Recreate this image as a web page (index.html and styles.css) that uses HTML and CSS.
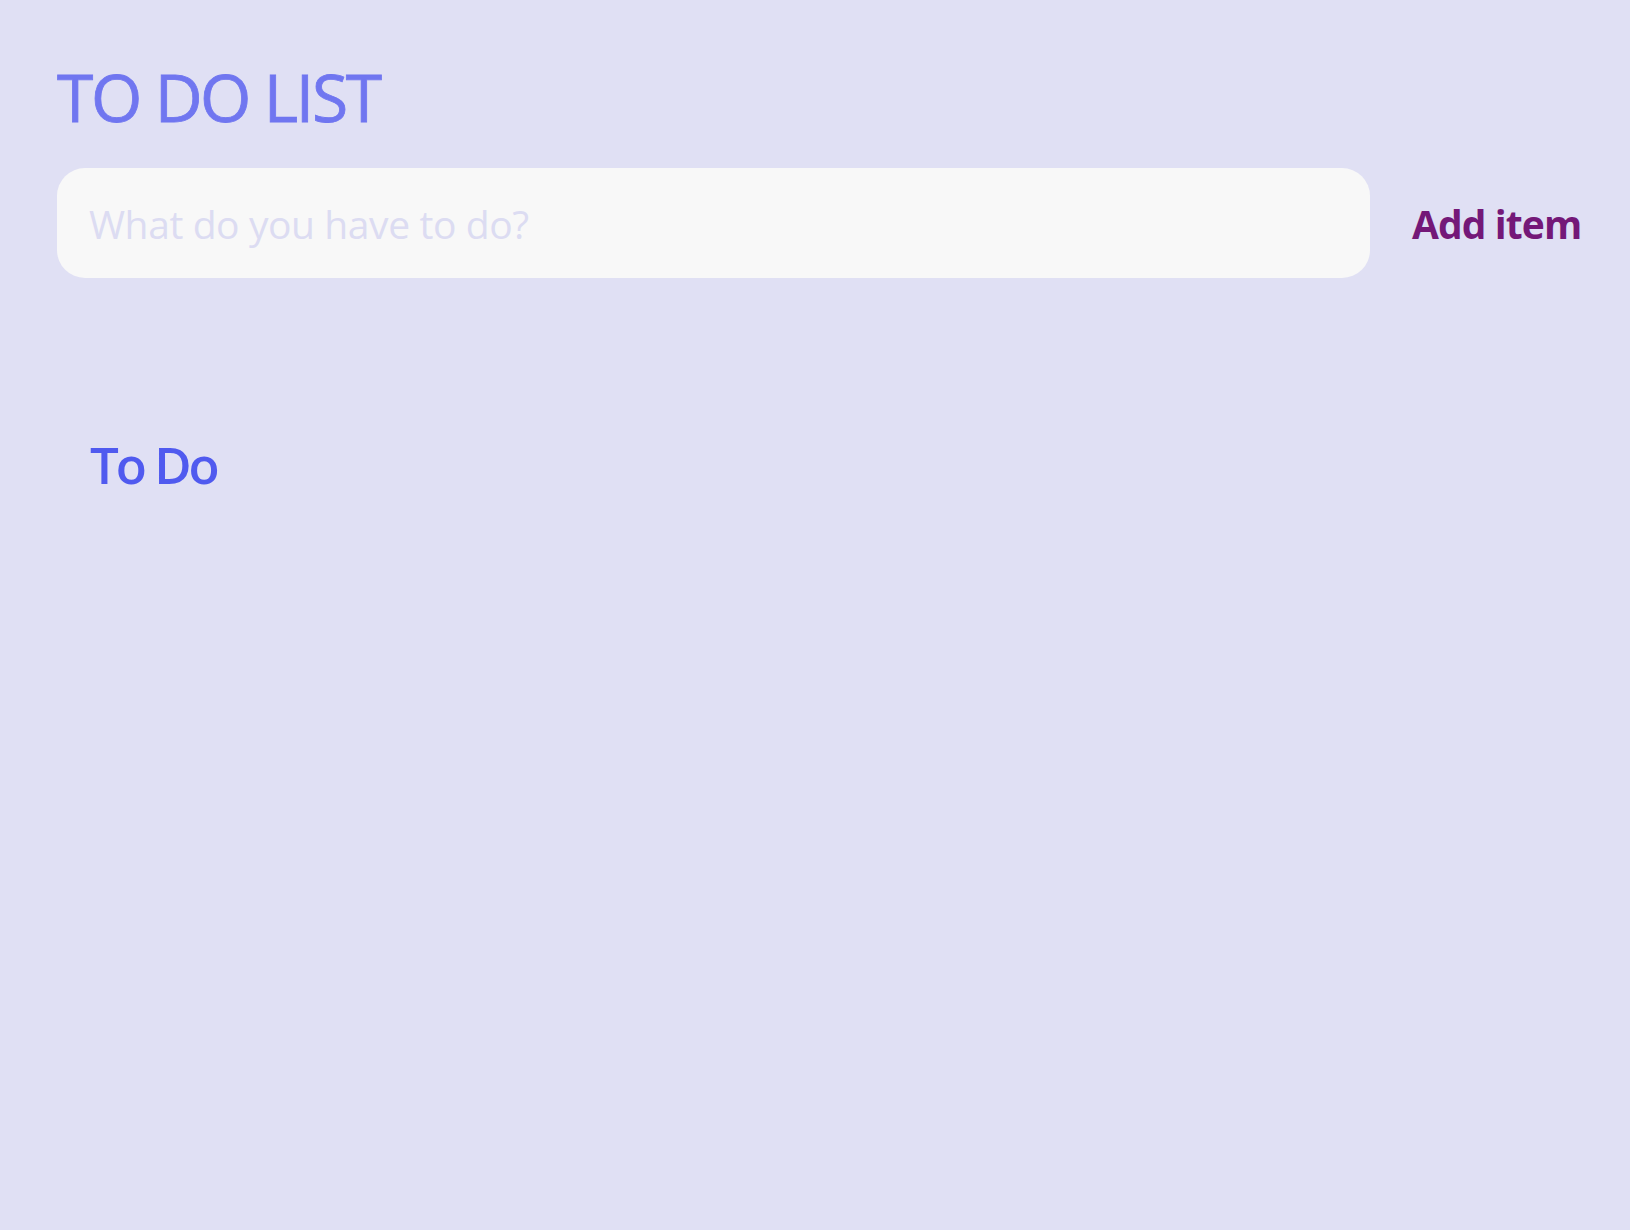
FILE: index.html
```html
<!DOCTYPE html>
<html lang="en">
<head>
<meta charset="utf-8">
<title>To Do List</title>
<link rel="stylesheet" href="styles.css">
</head>
<body>
<main class="app">
  <h1 class="title">TO DO LIST</h1>
  <form class="add-row">
    <input class="task-input" type="text" placeholder="What do you have to do?">
    <button class="add-btn" type="button">Add item</button>
  </form>
  <section class="list">
    <h2 class="list-title">To Do</h2>
  </section>
</main>
</body>
</html>
```
FILE: styles.css
```css
html, body {
  margin: 0;
  padding: 0;
  background: #e0e0f4;
}
body {
  font-family: "Open Sans", "DejaVu Sans", sans-serif;
  height: 1230px;
}
.app {
  padding: 63px 0 0 57px;
}
.title {
  margin: 0;
  font-size: 66px;
  line-height: 1;
  font-weight: 400;
  color: #7076f0;
  letter-spacing: -2.4px;
  -webkit-text-stroke: 0.8px #7076f0;
}
.add-row {
  display: flex;
  align-items: center;
  margin-top: 39px;
}
.task-input {
  width: 1313px;
  height: 110px;
  box-sizing: border-box;
  border: none;
  border-radius: 28px;
  background: #f8f8f8;
  padding: 0 0 0 32px;
  font-family: inherit;
  font-size: 39px;
  letter-spacing: -0.4px;
  color: #555;
  outline: none;
}
.task-input::placeholder {
  color: #dcdcf2;
}
.add-btn {
  border: none;
  background: none;
  padding: 0 0 0 42px;
  font-family: inherit;
  font-size: 39px;
  font-weight: 700;
  color: #741878;
  cursor: pointer;
  letter-spacing: -0.9px;
}
.list {
  padding-left: 33px;
  margin-top: 161px;
}
.list-title {
  margin: 0;
  font-size: 51px;
  line-height: 1;
  font-weight: 600;
  color: #505aef;
  letter-spacing: -3px;
}
```
